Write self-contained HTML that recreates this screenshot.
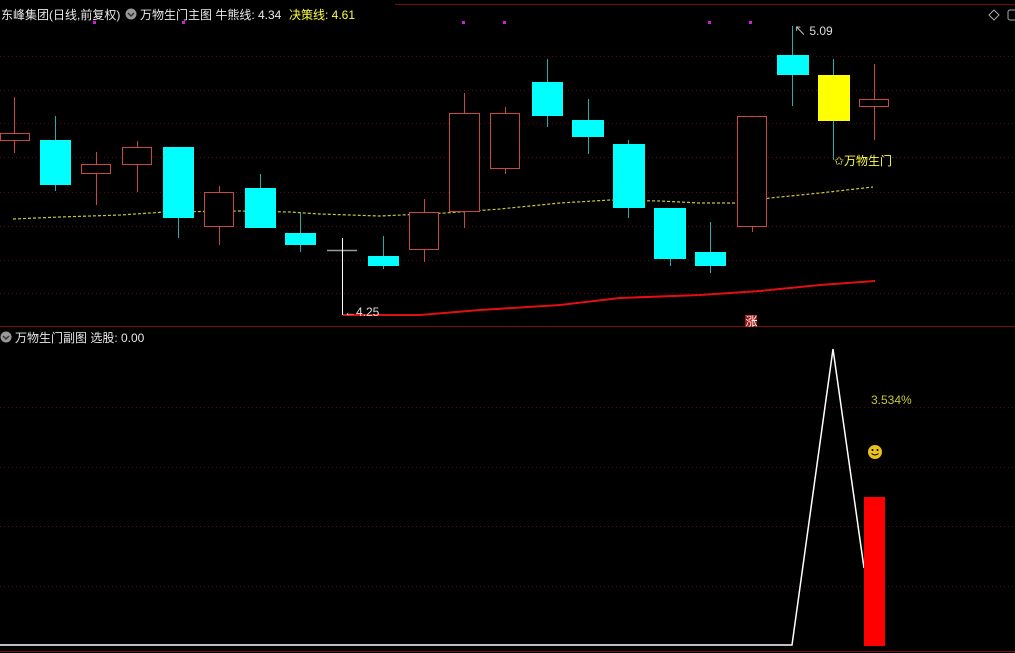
<!DOCTYPE html>
<html><head><meta charset="utf-8"><style>
html,body{margin:0;padding:0;background:#000;width:1015px;height:653px;overflow:hidden}
svg{display:block}
text{font-family:"Liberation Sans","Noto Sans CJK SC",sans-serif;font-size:12px}
</style></head><body>
<svg width="1015" height="653" viewBox="0 0 1015 653" xmlns="http://www.w3.org/2000/svg">
<rect width="1015" height="653" fill="#000"/>
<g stroke="#5a0a0a" stroke-width="1" stroke-dasharray="1,3">
<line x1="0" y1="56.5" x2="1015" y2="56.5"/><line x1="0" y1="90.5" x2="1015" y2="90.5"/>
<line x1="0" y1="123.5" x2="1015" y2="123.5"/><line x1="0" y1="157.5" x2="1015" y2="157.5"/>
<line x1="0" y1="192.5" x2="1015" y2="192.5"/><line x1="0" y1="226.5" x2="1015" y2="226.5"/>
<line x1="0" y1="260.5" x2="1015" y2="260.5"/><line x1="0" y1="293.5" x2="1015" y2="293.5"/>
<line x1="0" y1="407.5" x2="1015" y2="407.5"/><line x1="0" y1="467.5" x2="1015" y2="467.5"/>
<line x1="0" y1="526.5" x2="1015" y2="526.5"/><line x1="0" y1="586.5" x2="1015" y2="586.5"/>
</g>
<line x1="395" y1="4.5" x2="1015" y2="4.5" stroke="#6a1010"/>
<line x1="0" y1="326.5" x2="1015" y2="326.5" stroke="#7a1010"/>
<line x1="0" y1="651.5" x2="1015" y2="651.5" stroke="#7a1010"/>
<polyline fill="none" stroke="#c8c840" stroke-width="1.2" stroke-dasharray="3,2" points="13,219 60,217 120,215 165,212 240,211 290,212 320,214 380,216 445,213 500,209 560,203 610,200 660,201 700,203 740,203 770,198 820,193 873,187"/>
<polyline fill="none" stroke="#e01010" stroke-width="2" points="343,315 420,315 480,310 560,305 620,298 700,295 760,291 820,285 875,281"/>
<g stroke-width="1">
<g stroke="#c84848" fill="none">
<line x1="14.5" y1="97" x2="14.5" y2="153"/><rect x="0.5" y="133.5" width="29" height="7" fill="#000"/>
<line x1="96.5" y1="152" x2="96.5" y2="205"/><rect x="81.5" y="164.5" width="29" height="9" fill="#000"/>
<line x1="137.5" y1="141" x2="137.5" y2="192"/><rect x="122.5" y="147.5" width="29" height="17" fill="#000"/>
<line x1="219.5" y1="186" x2="219.5" y2="245"/><rect x="204.5" y="192.5" width="29" height="34" fill="#000"/>
<line x1="424.5" y1="199" x2="424.5" y2="262"/><rect x="409.5" y="212.5" width="29" height="37" fill="#000"/>
<line x1="464.5" y1="93" x2="464.5" y2="228"/><rect x="449.5" y="113.5" width="30" height="98" fill="#000"/>
<line x1="505.5" y1="107" x2="505.5" y2="174"/><rect x="490.5" y="113.5" width="29" height="55" fill="#000"/>
<line x1="752.5" y1="226" x2="752.5" y2="232"/><rect x="737.5" y="116.5" width="29" height="110" fill="#000"/>
<line x1="874.5" y1="64" x2="874.5" y2="140"/><rect x="859.5" y="99.5" width="29" height="7" fill="#000"/>
</g>
<g stroke="#20b0b0">
<line x1="55.5" y1="116" x2="55.5" y2="191"/><line x1="178.5" y1="147" x2="178.5" y2="238"/>
<line x1="260.5" y1="174" x2="260.5" y2="228"/><line x1="300.5" y1="212" x2="300.5" y2="252"/>
<line x1="383.5" y1="236" x2="383.5" y2="269"/><line x1="547.5" y1="59" x2="547.5" y2="127"/>
<line x1="588.5" y1="99" x2="588.5" y2="154"/><line x1="628.5" y1="140" x2="628.5" y2="218"/>
<line x1="670.5" y1="208" x2="670.5" y2="266"/><line x1="710.5" y1="222" x2="710.5" y2="273"/>
<line x1="792.5" y1="26" x2="792.5" y2="106"/><line x1="833.5" y1="59" x2="833.5" y2="160"/>
</g>
<g fill="#00ffff">
<rect x="40" y="140" width="31" height="45"/><rect x="163" y="147" width="31" height="71"/>
<rect x="245" y="188" width="31" height="40"/><rect x="285" y="233" width="31" height="12"/>
<rect x="368" y="256" width="31" height="10"/><rect x="532" y="82" width="31" height="34"/>
<rect x="572" y="120" width="32" height="17"/><rect x="613" y="144" width="32" height="64"/>
<rect x="654" y="208" width="32" height="51"/><rect x="695" y="252" width="31" height="14"/>
<rect x="777" y="55" width="32" height="20"/>
</g>
<rect x="818" y="75" width="32" height="46" fill="#ffff00"/>
</g>
<line x1="327" y1="250.5" x2="357" y2="250.5" stroke="#999" stroke-width="1.5"/>
<line x1="342.5" y1="238" x2="342.5" y2="315" stroke="#fff"/>
<text x="344" y="316" fill="#ddd" font-size="11">←4.25</text>
<text x="794" y="35" fill="#ddd" font-size="11">↖ 5.09</text>
<text x="834" y="165" fill="#ffff40">✩万物生门</text>
<g fill="#d020d0"><rect x="93" y="21" width="3" height="3"/><rect x="182" y="21" width="3" height="3"/><rect x="462" y="21" width="3" height="3"/><rect x="503" y="21" width="3" height="3"/><rect x="708" y="21" width="3" height="3"/><rect x="749" y="21" width="3" height="3"/></g>
<rect x="745" y="315" width="12" height="12" fill="#a01010"/>
<text x="745.5" y="325.5" fill="#fff" font-size="10">涨</text>
<text x="1" y="19" fill="#e8e8e8">东峰集团(日线,前复权)</text>
<circle cx="131" cy="14" r="5.5" fill="#999"/><path d="M128,13 l3,3 l3,-3" stroke="#333" stroke-width="1.5" fill="none"/>
<text x="140" y="19" fill="#e8e8e8">万物生门主图 牛熊线: 4.34</text>
<text x="289" y="19" fill="#ffff40">决策线: 4.61</text>
<path d="M994,10 l5,5 l-5,5 l-5,-5z" stroke="#aaa" fill="none"/>
<rect x="1008" y="10" width="9" height="10" rx="2" stroke="#aaa" fill="none"/>
<circle cx="6" cy="337" r="5.5" fill="#999"/><path d="M3,336 l3,3 l3,-3" stroke="#333" stroke-width="1.5" fill="none"/>
<text x="15" y="342" fill="#e8e8e8">万物生门副图 选股: 0.00</text>
<polyline fill="none" stroke="#fff" stroke-width="1.5" points="0,645 792,645 833,349 864,568"/>
<rect x="864" y="497" width="21" height="149" fill="#ff0000"/>
<text x="871" y="404" fill="#c8c830" font-size="11">3.534%</text>
<circle cx="875" cy="452" r="7" fill="#e8c020"/>
<circle cx="872.5" cy="450" r="1" fill="#000"/><circle cx="877.5" cy="450" r="1" fill="#000"/>
<path d="M871.5,453.5 q3.5,3 7,0" stroke="#000" fill="none"/>
</svg>
</body></html>
